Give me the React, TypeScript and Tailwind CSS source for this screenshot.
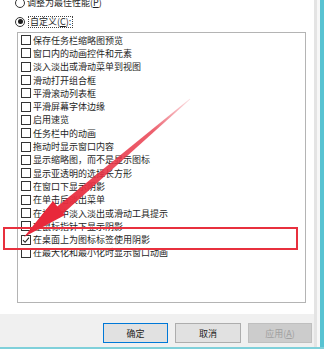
import React from "react";

// visual effects options, as in the Windows performance dialog
const items = [
  "保存任务栏缩略图预览",
  "窗口内的动画控件和元素",
  "淡入淡出或滑动菜单到视图",
  "滑动打开组合框",
  "平滑滚动列表框",
  "平滑屏幕字体边缘",
  "启用速览",
  "任务栏中的动画",
  "拖动时显示窗口内容",
  "显示缩略图，而不是显示图标",
  "显示亚透明的选择长方形",
  "在窗口下显示阴影",
  "在单击后淡出菜单",
  "在视图中淡入淡出或滑动工具提示",
  "在鼠标指针下显示阴影",
  "在桌面上为图标标签使用阴影",
  "在最大化和最小化时显示窗口动画",
];

const CHECKED = 15;

function CheckBox({ checked }: { checked: boolean }) {
  return (
    <div className="w-[10px] h-[10px] border border-[#333] bg-white shrink-0 flex items-center justify-center">
      {checked && (
        <svg width="8" height="8" viewBox="0 0 8 8">
          <path d="M1 4.2 L3.1 6.3 L7 1.6" fill="none" stroke="#222" strokeWidth="1.1" />
        </svg>
      )}
    </div>
  );
}

function Arrow() {
  // tapered shaft plus a long wedge head, screenshot-tool style
  return (
    <svg className="absolute inset-0 pointer-events-none" width="324" height="350" viewBox="0 0 324 350">
      <defs>
        <linearGradient id="shaft" x1="190" y1="99" x2="40" y2="225" gradientUnits="userSpaceOnUse">
          <stop offset="0" stopColor="#e8394a" stopOpacity="0.15" />
          <stop offset="0.25" stopColor="#e8394a" stopOpacity="0.8" />
          <stop offset="1" stopColor="#e8283a" />
        </linearGradient>
      </defs>
      <polygon points="190.3,99.3 189.7,98.7 56,207.5 62,214.5" fill="url(#shaft)" />
      <polygon points="24,237 53,201 59,208.5 65,215" fill="#e8283a" />
    </svg>
  );
}

export default function App() {
  return (
    <div
      className="relative w-[324px] h-[350px] overflow-hidden bg-white flex flex-col text-[#1e1e1e] text-[9px] leading-none"
      style={{ fontFamily: '"Noto Sans CJK SC", "Noto Sans", sans-serif' }}
    >
      <div className="h-[347px] flex">
        <div className="w-[314px] flex flex-col">
          <div className="flex-1 flex flex-col">
            <div className="-mt-[4px] h-[13px] flex items-center">
              <div className="ml-[15px] w-[10px] h-[10px] rounded-full border border-[#333] bg-white" />
              <span className="ml-[2px]">
                调整为最佳性能(<span className="underline">P</span>)
              </span>
            </div>
            <div className="mt-[6px] h-[13px] flex items-center">
              <div className="ml-[15px] w-[10px] h-[10px] rounded-full border border-[#333] bg-white flex items-center justify-center">
                <div className="w-[5px] h-[5px] rounded-full bg-[#1a1a1a]" />
              </div>
              <span className="ml-[3px] h-[12px] px-[1px] border border-dotted border-[#444] flex items-center">
                自定义(<span className="underline">C</span>):
              </span>
            </div>
            <div className="mt-[4px] ml-[17px] w-[289px] h-[271px] border border-[#b4b4b4] bg-white pt-[0.5px]">
              {items.map((label, i) => (
                <div key={label} className="h-[13.31px] flex items-center pl-[3px] whitespace-nowrap">
                  <CheckBox checked={i === CHECKED} />
                  <span className="ml-[2px]">{label}</span>
                </div>
              ))}
            </div>
          </div>
          <div className="h-[33px] bg-[#f0f0f0] flex justify-end gap-[7px] pt-[9px] pr-[2px]">
            <button className="w-[65px] h-[20px] border border-[#0078d7] bg-[#e1e1e1] text-[9px] text-[#1e1e1e]">
              确定
            </button>
            <button className="w-[66px] h-[20px] border border-[#adadad] bg-[#e1e1e1] text-[9px] text-[#1e1e1e]">
              取消
            </button>
            <button className="w-[64px] h-[20px] border border-[#bfbfbf] bg-[#cccccc] text-[9px] text-[#a0a0a0]">
              应用(<span className="underline">A</span>)
            </button>
          </div>
        </div>
        <div className="w-[3px] bg-[#e4e4e4]" />
        <div className="w-[3px] bg-[#f7f7f7]" />
        <div className="w-[4px] bg-[#58c3d2]" />
      </div>
      <div className="h-[2px] bg-[#7fd0da]" />
      <div className="flex-1 bg-white" />
      <div className="absolute left-[3px] top-[227px] w-[295px] h-[23px] border-2 border-[#e8303e]" />
      <Arrow />
    </div>
  );
}
